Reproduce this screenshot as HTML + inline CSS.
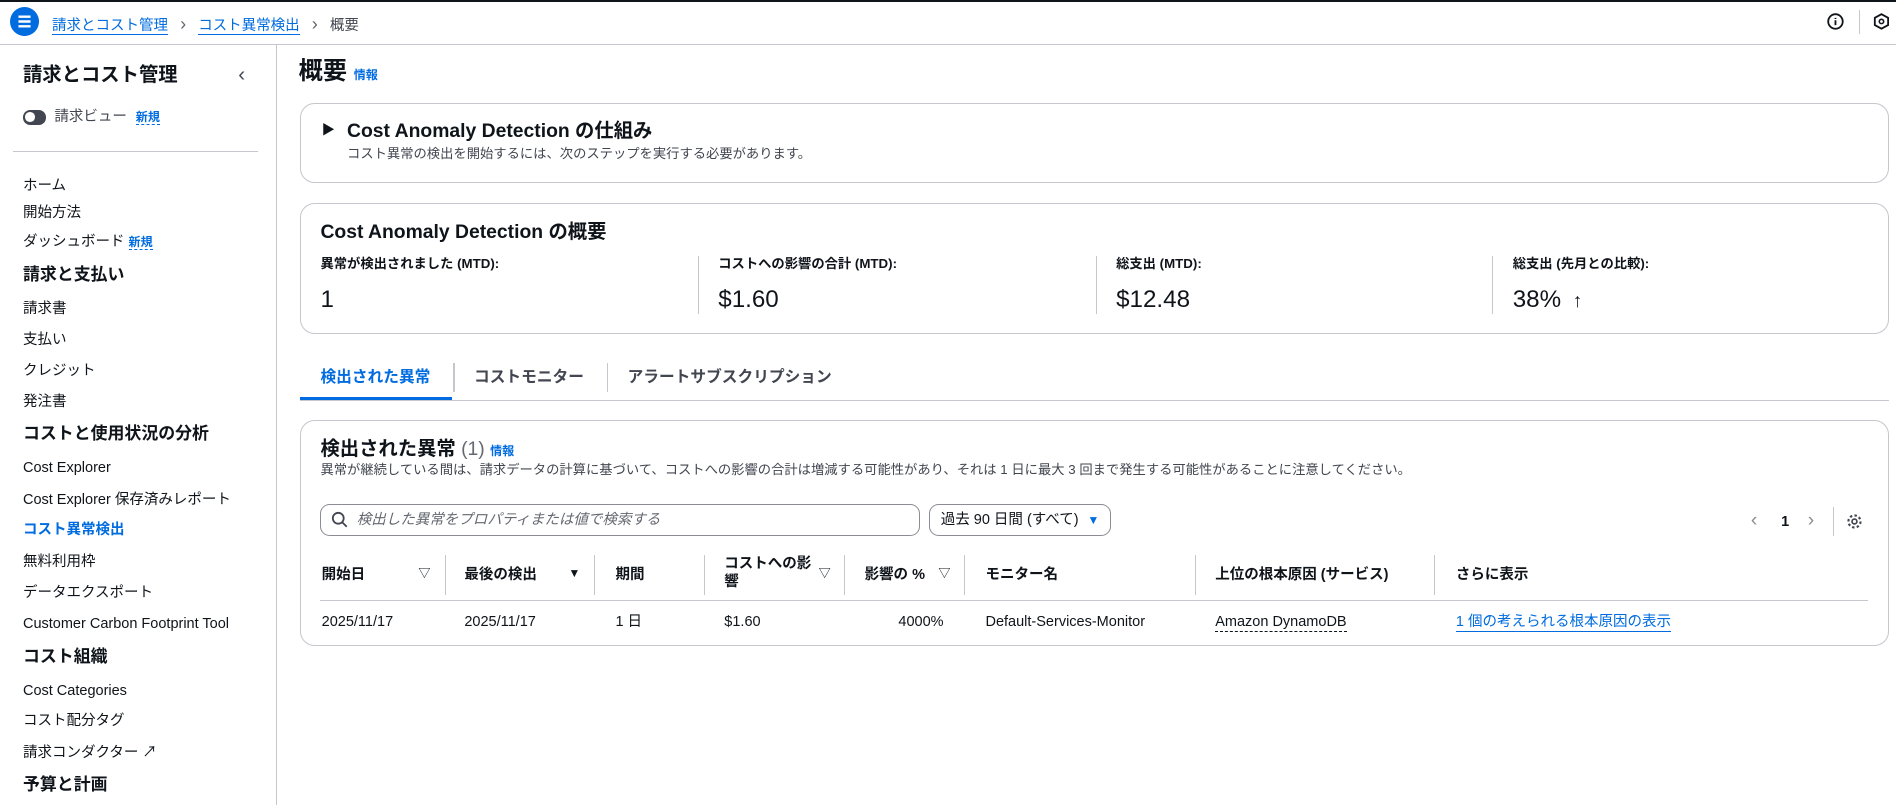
<!DOCTYPE html>
<html><head><meta charset="utf-8">
<style>
html{zoom:1.2092}
*{box-sizing:border-box;margin:0;padding:0}
body{width:1568px;height:666px;overflow:hidden;background:#fff;font-family:"Liberation Sans","Noto Sans CJK JP",sans-serif;color:#0f141a;position:relative;font-size:12px}
.a{position:absolute;white-space:nowrap;line-height:1.25}
.b{font-weight:bold}
.card{position:absolute;border:1px solid #c6c6cd;border-radius:12px;background:#fff}
.new{color:#006ce0;font-weight:bold;font-size:10px;border-bottom:1px dashed #006ce0}
.vs{position:absolute;width:1px;background:#c6c6cd}
.nav{font-size:12px;color:#0f141a}
.h{font-size:14px;font-weight:bold}
.blue{color:#006ce0 !important}
</style></head><body>
<div class="a" style="left:0;top:0;width:1568px;height:2px;background:#0f141a"></div>
<div class="a" style="left:0;top:36px;width:1568px;height:1px;background:#c6c6cd"></div>
<svg class="a" style="left:8px;top:6px" width="24" height="24"><circle cx="12" cy="12" r="12" fill="#006ce0"/><path d="M7 8h10M7 12h10M7 16h10" stroke="#fff" stroke-width="2"/></svg>
<div class="a" style="left:43px;top:11px;font-size:12px"><span class="blue" style="border-bottom:1px solid #006ce0">請求とコスト管理</span><span style="color:#656871;margin:0 10px;font-size:15px">›</span><span class="blue" style="border-bottom:1px solid #006ce0">コスト異常検出</span><span style="color:#656871;margin:0 10px;font-size:15px">›</span><span style="color:#424650">概要</span></div>
<svg class="a" style="left:1511px;top:11px" width="14" height="14"><circle cx="7" cy="7" r="6" fill="none" stroke="#0f141a" stroke-width="1.5"/><path d="M7 6v4M7 4v1" stroke="#0f141a" stroke-width="1.5"/></svg>
<div class="vs" style="left:1537px;top:8px;height:20px"></div>
<svg class="a" style="left:1549px;top:11px" width="14" height="14"><path d="M7 1l5.5 3v6L7 13 1.5 10V4z" fill="none" stroke="#0f141a" stroke-width="1.5"/><circle cx="7" cy="7" r="1.8" fill="none" stroke="#0f141a" stroke-width="1.3"/></svg>

<div class="vs" style="left:228px;top:37px;height:629px"></div>
<div class="a b" style="left:19px;top:52px;font-size:16px">請求とコスト管理</div>
<div class="a" style="left:197px;top:51px;font-size:17px;color:#424650">‹</div>
<div class="a" style="left:19px;top:91px;width:19px;height:12px;border-radius:6px;background:#424650"></div>
<div class="a" style="left:21px;top:93px;width:8px;height:8px;border-radius:4px;background:#fff"></div>
<div class="a" style="left:45px;top:89px;font-size:12px;color:#424650">請求ビュー <span class="new" style="margin-left:4px">新規</span></div>
<div class="a" style="left:11px;top:125px;width:202px;height:1px;background:#c6c6cd"></div>
<div class="a nav" style="left:19px;top:146px">ホーム</div>
<div class="a nav" style="left:19px;top:169px">開始方法</div>
<div class="a nav" style="left:19px;top:193px">ダッシュボード <span class="new">新規</span></div>
<div class="a h" style="left:19px;top:218px">請求と支払い</div>
<div class="a nav" style="left:19px;top:248px">請求書</div>
<div class="a nav" style="left:19px;top:274px">支払い</div>
<div class="a nav" style="left:19px;top:299px">クレジット</div>
<div class="a nav" style="left:19px;top:325px">発注書</div>
<div class="a h" style="left:19px;top:350px">コストと使用状況の分析</div>
<div class="a nav" style="left:19px;top:380px">Cost Explorer</div>
<div class="a nav" style="left:19px;top:406px">Cost Explorer 保存済みレポート</div>
<div class="a nav blue b" style="left:19px;top:431px">コスト異常検出</div>
<div class="a nav" style="left:19px;top:457px">無料利用枠</div>
<div class="a nav" style="left:19px;top:483px">データエクスポート</div>
<div class="a nav" style="left:19px;top:509px">Customer Carbon Footprint Tool</div>
<div class="a h" style="left:19px;top:534px">コスト組織</div>
<div class="a nav" style="left:19px;top:564px">Cost Categories</div>
<div class="a nav" style="left:19px;top:589px">コスト配分タグ</div>
<div class="a nav" style="left:19px;top:615px">請求コンダクター ↗</div>
<div class="a h" style="left:19px;top:640px">予算と計画</div>

<div class="a b" style="left:247px;top:47px;font-size:20px">概要 <span class="blue" style="font-size:10px">情報</span></div>

<div class="card" style="left:248px;top:85px;width:1314px;height:66px"></div>
<div class="a" style="left:266px;top:101px;font-size:11px">▶</div>
<div class="a b" style="left:287px;top:98px;font-size:16px">Cost Anomaly Detection の仕組み</div>
<div class="a" style="left:287px;top:121px;font-size:11px;color:#424650">コスト異常の検出を開始するには、次のステップを実行する必要があります。</div>

<div class="card" style="left:248px;top:168px;width:1314px;height:108px"></div>
<div class="a b" style="left:265px;top:182px;font-size:16px">Cost Anomaly Detection の概要</div>
<div class="vs" style="left:577px;top:212px;height:48px"></div>
<div class="vs" style="left:906px;top:212px;height:48px"></div>
<div class="vs" style="left:1234px;top:212px;height:48px"></div>
<div class="a b" style="left:265px;top:212px;font-size:11px">異常が検出されました (MTD):</div>
<div class="a" style="left:265px;top:236px;font-size:20px">1</div>
<div class="a b" style="left:594px;top:212px;font-size:11px">コストへの影響の合計 (MTD):</div>
<div class="a" style="left:594px;top:236px;font-size:20px">$1.60</div>
<div class="a b" style="left:923px;top:212px;font-size:11px">総支出 (MTD):</div>
<div class="a" style="left:923px;top:236px;font-size:20px">$12.48</div>
<div class="a b" style="left:1251px;top:212px;font-size:11px">総支出 (先月との比較):</div>
<div class="a" style="left:1251px;top:236px;font-size:20px">38% <span style="font-size:16px;margin-left:4px">↑</span></div>

<div class="a b blue" style="left:265px;top:304px;font-size:13px">検出された異常</div>
<div class="a" style="left:248px;top:328px;width:126px;height:4px;background:#006ce0"></div>
<div class="vs" style="left:375px;top:300px;height:24px"></div>
<div class="a b" style="left:392px;top:304px;font-size:13px;color:#424650">コストモニター</div>
<div class="vs" style="left:502px;top:300px;height:24px"></div>
<div class="a b" style="left:519px;top:304px;font-size:13px;color:#424650">アラートサブスクリプション</div>
<div class="a" style="left:248px;top:331px;width:1314px;height:1px;background:#c6c6cd"></div>

<div class="card" style="left:248px;top:347px;width:1314px;height:187px"></div>
<div class="a b" style="left:265px;top:361px;font-size:16px">検出された異常 <span style="font-weight:normal;color:#656871">(1)</span> <span class="blue" style="font-size:10px">情報</span></div>
<div class="a" style="left:265px;top:382px;font-size:11px;color:#424650">異常が継続している間は、請求データの計算に基づいて、コストへの影響の合計は増減する可能性があり、それは 1 日に最大 3 回まで発生する可能性があることに注意してください。</div>
<div class="a" style="left:265px;top:417px;width:496px;height:26px;border:1px solid #8c8c94;border-radius:8px"></div>
<svg class="a" style="left:274px;top:423px" width="14" height="14"><circle cx="6" cy="6" r="4.5" fill="none" stroke="#424650" stroke-width="1.5"/><path d="M9.5 9.5L13 13" stroke="#424650" stroke-width="1.5"/></svg>
<div class="a" style="left:295px;top:423px;font-size:12px;color:#656871;font-style:italic">検出した異常をプロパティまたは値で検索する</div>
<div class="a" style="left:768px;top:417px;width:151px;height:26px;border:1px solid #8c8c94;border-radius:8px"></div>
<div class="a" style="left:778px;top:423px;font-size:12px">過去 90 日間 (すべて) <span class="blue" style="font-size:10px;margin-left:4px">▼</span></div>
<div class="a" style="left:1448px;top:420px;font-size:16px;color:#8c8c94">‹</div>
<div class="a b" style="left:1473px;top:424px;font-size:12px">1</div>
<div class="a" style="left:1495px;top:420px;font-size:16px;color:#8c8c94">›</div>
<div class="vs" style="left:1516px;top:419px;height:24px"></div>
<svg class="a" style="left:1527px;top:424px" width="14" height="14"><circle cx="7" cy="7" r="2" fill="none" stroke="#424650" stroke-width="1.4"/><circle cx="7" cy="7" r="5" fill="none" stroke="#424650" stroke-width="1.8" stroke-dasharray="2 1.9"/></svg>

<div class="a b" style="left:266px;top:468px;font-size:12px">開始日</div><div class="a" style="left:346px;top:468px;font-size:10px">▽</div>
<div class="vs" style="left:368px;top:459px;height:33px"></div>
<div class="a b" style="left:384px;top:468px;font-size:12px">最後の検出</div><div class="a" style="left:470px;top:468px;font-size:10px">▼</div>
<div class="vs" style="left:491px;top:459px;height:33px"></div>
<div class="a b" style="left:509px;top:468px;font-size:12px">期間</div>
<div class="vs" style="left:582px;top:459px;height:33px"></div>
<div class="a b" style="left:599px;top:459px;font-size:12px;line-height:15px">コストへの影<br>響</div><div class="a" style="left:677px;top:468px;font-size:10px">▽</div>
<div class="vs" style="left:698px;top:459px;height:33px"></div>
<div class="a b" style="left:715px;top:468px;font-size:12px">影響の %</div><div class="a" style="left:776px;top:468px;font-size:10px">▽</div>
<div class="vs" style="left:797px;top:459px;height:33px"></div>
<div class="a b" style="left:815px;top:468px;font-size:12px">モニター名</div>
<div class="vs" style="left:988px;top:459px;height:33px"></div>
<div class="a b" style="left:1005px;top:468px;font-size:12px">上位の根本原因 (サービス)</div>
<div class="vs" style="left:1186px;top:459px;height:33px"></div>
<div class="a b" style="left:1204px;top:468px;font-size:12px">さらに表示</div>
<div class="a" style="left:265px;top:496px;width:1280px;height:1px;background:#c6c6cd"></div>
<div class="a" style="left:266px;top:507px;font-size:12px;line-height:15px">2025/11/17</div>
<div class="a" style="left:384px;top:507px;font-size:12px;line-height:15px">2025/11/17</div>
<div class="a" style="left:509px;top:507px;font-size:12px;line-height:15px">1 日</div>
<div class="a" style="left:599px;top:507px;font-size:12px;line-height:15px">$1.60</div>
<div class="a" style="left:743px;top:507px;font-size:12px;line-height:15px">4000%</div>
<div class="a" style="left:815px;top:507px;font-size:12px;line-height:15px">Default-Services-Monitor</div>
<div class="a" style="left:1005px;top:507px;font-size:12px;line-height:15px;border-bottom:1px dashed #0f141a">Amazon DynamoDB</div>
<div class="a blue" style="left:1204px;top:507px;font-size:12px;line-height:15px;border-bottom:1px solid #006ce0">1 個の考えられる根本原因の表示</div>
</body></html>
